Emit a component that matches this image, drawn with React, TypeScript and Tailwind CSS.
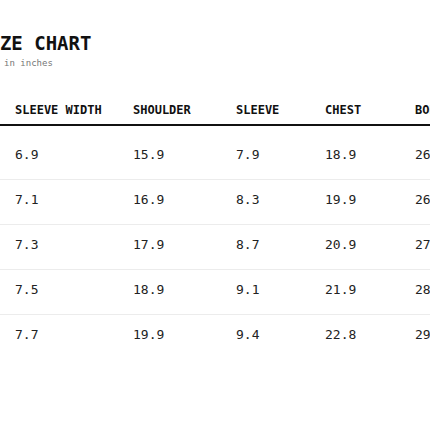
import React from 'react'

const columns = ['SLEEVE WIDTH', 'SHOULDER', 'SLEEVE', 'CHEST', 'BODY LENGTH']

const rows = [
  ['6.9', '15.9', '7.9', '18.9', '26.0'],
  ['7.1', '16.9', '8.3', '19.9', '26.8'],
  ['7.3', '17.9', '8.7', '20.9', '27.6'],
  ['7.5', '18.9', '9.1', '21.9', '28.3'],
  ['7.7', '19.9', '9.4', '22.8', '29.1'],
]

const App = () => {
  return (
    <div className="w-[430px] h-[430px] overflow-hidden bg-white font-['DejaVu_Sans_Mono',monospace] pt-[31px]">
      {/* heading is scrolled off to the left a little */}
      <div className="-ml-[23px]">
        <h1 className="text-[19px] leading-[24px] font-bold text-[#111]">SIZE CHART</h1>
        <p className="mt-[2px] text-[9px] leading-[12px] text-[#777]">Size in inches</p>
      </div>

      <table className="mt-[24px] table-fixed w-[530px] border-collapse">
        <colgroup>
          <col className="w-[118px]" />
          <col className="w-[103px]" />
          <col className="w-[89px]" />
          <col className="w-[90px]" />
          <col className="w-[130px]" />
        </colgroup>
        <thead>
          <tr className="border-b-2 border-[#111]">
            {columns.map(col => (
              <th
                key={col}
                className="pl-[15px] pt-[9px] pb-[6px] text-left text-[12px] leading-4 font-bold text-[#111] whitespace-nowrap"
              >
                {col}
              </th>
            ))}
          </tr>
        </thead>
        <tbody>
          {rows.map((row, i) => (
            <tr key={i} className={i < rows.length - 1 ? 'border-b border-[#ececec]' : ''}>
              {row.map((val, j) => (
                <td
                  key={j}
                  className={`pl-[15px] pb-[14px] text-[13px] leading-5 text-[#222] ${i === 0 ? 'pt-[19px]' : 'pt-[10px]'}`}
                >
                  {val}
                </td>
              ))}
            </tr>
          ))}
        </tbody>
      </table>
    </div>
  )
}

export default App
